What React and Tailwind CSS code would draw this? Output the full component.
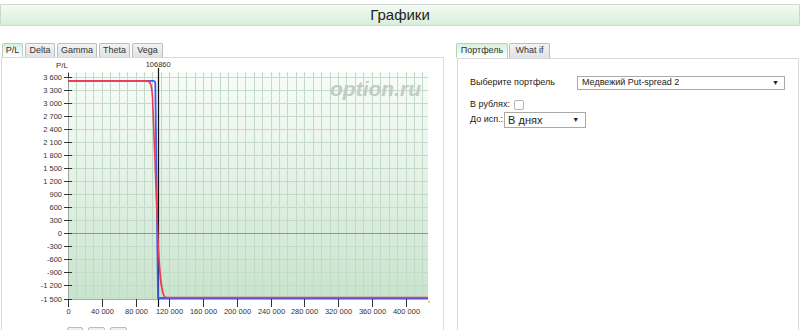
import React from 'react';

const font = "'Liberation Sans', Arial, sans-serif";

// chart scale, in page pixels
const X0 = 68;
const X1 = 428;
const xOf = (v) => X0 + (v / 40000) * 33.75;
const yOf = (v) => 76.5 + ((3600 - v) / 300) * 13.06;

const fmt = (n) => {
  const s = String(Math.abs(n)).replace(/\B(?=(\d{3})+(?!\d))/g, ' ');
  return n < 0 ? '-' + s : s;
};

function Chart() {
  const yTicks = [];
  for (let v = 3600; v >= -1500; v -= 300) yTicks.push(v);
  const xTicks = [];
  for (let v = 0; v <= 400000; v += 40000) xTicks.push(v);
  const vLines = [];
  for (let i = 1; i <= 42; i++) vLines.push(Math.round(X0 + i * 8.4375) + 0.5);

  const top = yOf(3500);
  const bottom = yOf(-1500) - 0.5;
  const strike = xOf(106860);

  return (
    <svg width="441" height="264" viewBox="2 58 441 264" className="block">
      <defs>
        <linearGradient id="plotBg" x1="0" y1="0" x2="0" y2="1">
          <stop offset="0" stopColor="#f8fcf9" />
          <stop offset="0.5" stopColor="#e2f1e4" />
          <stop offset="1" stopColor="#c8e4cc" />
        </linearGradient>
      </defs>

      <rect x={X0} y="72" width={X1 - X0} height="228" fill="url(#plotBg)" />

      {/* grid */}
      {vLines.map((x) => (
        <line key={'v' + x} x1={x} y1="72" x2={x} y2="300" stroke="#c3d9ca" strokeWidth="1" />
      ))}
      {yTicks.map((v) => {
        const y = Math.round(yOf(v)) + 0.5;
        return <line key={'h' + v} x1={X0} y1={y} x2={X1} y2={y} stroke="#c3d9ca" strokeWidth="1" />;
      })}

      {/* watermark */}
      <text
        x="421"
        y="96"
        textAnchor="end"
        fontFamily={font}
        fontSize="21"
        fontWeight="bold"
        fontStyle="italic"
        fill="#c4ccc6"
      >
        option.ru
      </text>

      {/* zero line + axes */}
      <line x1={X0} y1={Math.round(yOf(0)) + 0.5} x2={X1} y2={Math.round(yOf(0)) + 0.5} stroke="#8c9a90" strokeWidth="1" />
      <line x1={X0 + 0.5} y1="72" x2={X0 + 0.5} y2="300" stroke="#9aa59d" strokeWidth="1" />
      <line x1={X0} y1="299.5" x2={X1} y2="299.5" stroke="#a6b0a8" strokeWidth="1" />

      {/* y ticks + labels */}
      {yTicks.map((v) => {
        const y = Math.round(yOf(v)) + 0.5;
        return (
          <g key={'yt' + v}>
            <line x1="64" y1={y} x2="72" y2={y} stroke="#333" strokeWidth="1" />
            <text x="62" y={y + 2.6} textAnchor="end" fontFamily={font} fontSize="7.5" fill="#333">
              {fmt(v)}
            </text>
          </g>
        );
      })}
      <line x1="68.5" y1="73" x2="68.5" y2="78" stroke="#333" strokeWidth="1" />

      {/* x ticks + labels */}
      {xTicks.map((v) => {
        const x = Math.round(xOf(v)) + 0.5;
        return (
          <g key={'xt' + v}>
            <line x1={x} y1="299" x2={x} y2="307" stroke="#333" strokeWidth="1" />
            <text x={x} y="314" textAnchor="middle" fontFamily={font} fontSize="7.5" fill="#333">
              {fmt(v)}
            </text>
          </g>
        );
      })}
      <text x="428" y="303" fontFamily={font} fontSize="6" fill="#666">›</text>

      {/* strike line */}
      <line x1={Math.round(strike) + 0.5} y1="68" x2={Math.round(strike) + 0.5} y2="307" stroke="#111" strokeWidth="1.2" />
      <text x={strike} y="67" textAnchor="middle" fontFamily={font} fontSize="7.5" fill="#333">
        106860
      </text>
      <text x="62" y="67.5" textAnchor="middle" fontFamily={font} fontSize="8" fill="#333">
        P/L
      </text>

      {/* expiry payoff */}
      <path
        d={`M${X0} ${top} L153.5 ${top} Q155 ${top} 155.3 ${top + 2} L158 ${bottom} L${X1} ${bottom}`}
        fill="none"
        stroke="#3b5df0"
        strokeWidth="1.8"
      />
      {/* current P/L */}
      <path
        d={`M${X0} ${top} L147 ${top} C150.5 ${top} 151.5 ${top + 4} 152.5 ${top + 16} L156.5 200 L158 240 C159.5 272 161 ${bottom - 1} 166 ${bottom - 0.5} L${X1} ${bottom - 0.5}`}
        fill="none"
        stroke="#ec3b55"
        strokeWidth="1.6"
      />
    </svg>
  );
}

function Tab({ label, active, w }) {
  return (
    <div
      className={`h-full ${w} flex items-center justify-center border border-b-0 rounded-t-[2px] text-[9px] text-[#333] ${
        active
          ? 'border-[#b9cfbc] bg-gradient-to-b from-[#d9efdc] to-white'
          : 'border-[#bdbdbd] bg-gradient-to-b from-[#f3f3f3] to-[#e2e2e2]'
      }`}
    >
      {label}
    </div>
  );
}

export default function App() {
  return (
    <div className="w-[800px] h-[330px] overflow-hidden bg-white font-['Liberation_Sans',Arial,sans-serif] text-[#222]">
      <div className="pt-[4px]">
        <div className="h-[22px] border border-[#cfd8cf] bg-gradient-to-b from-[#f4fbf4] to-[#d8eeda] flex items-center justify-center text-[15px] text-[#222]">
          Графики
        </div>
      </div>

      <div className="mt-[17px] flex">
        {/* left: charts */}
        <div className="w-[444px] shrink-0">
          <div className="h-[14px] pl-[2px] flex gap-[2px]">
            <Tab label="P/L" active w="w-[21px]" />
            <Tab label="Delta" w="w-[30px]" />
            <Tab label="Gamma" w="w-[40px]" />
            <Tab label="Theta" w="w-[31px]" />
            <Tab label="Vega" w="w-[31px]" />
          </div>
          <div className="ml-[1px] w-[443px] h-[280px] border border-b-0 border-[#dadada]">
            <Chart />
            <div className="mt-[5px] ml-[65px] flex gap-[5px]">
              <div className="w-[16px] h-[12px] border border-[#bbb] bg-[#eee] rounded-[2px]" />
              <div className="w-[17px] h-[12px] border border-[#bbb] bg-[#eee] rounded-[2px]" />
              <div className="w-[17px] h-[12px] border border-[#bbb] bg-[#eee] rounded-[2px]" />
            </div>
          </div>
        </div>

        {/* right: portfolio */}
        <div className="ml-[12px] w-[344px] shrink-0">
          <div className="h-[15px] flex gap-[1px]">
            <Tab label="Портфель" active w="w-[52px]" />
            <Tab label="What if" w="w-[41px]" />
          </div>
          <div className="ml-[1px] w-[342px] h-[280px] border border-b-0 border-[#dadada] pt-[17px] pl-[12px] text-[9px] text-[#222]">
            <div className="flex items-center h-[14px]">
              <div className="w-[107px]">Выберите портфель</div>
              <div className="w-[208px] h-[14px] border border-[#a9a9a9] bg-white flex items-center justify-between pl-[4px] pr-[5px]">
                <span>Медвежий Put-spread 2</span>
                <span className="text-[7px]">▼</span>
              </div>
            </div>
            <div className="mt-[9px] flex items-center h-[11px]">
              <span>В рублях:</span>
              <span className="ml-[4px] w-[10px] h-[10px] border border-[#b5b5b5] rounded-[2px] bg-white" />
            </div>
            <div className="mt-[2px] flex items-center h-[16px]">
              <span>До исп.:</span>
              <div className="ml-[1px] w-[82px] h-[16px] border border-[#a9a9a9] bg-white flex items-center justify-between pl-[3px] pr-[6px]">
                <span className="text-[11px]">В днях</span>
                <span className="text-[7px]">▼</span>
              </div>
            </div>
          </div>
        </div>
      </div>
    </div>
  );
}
